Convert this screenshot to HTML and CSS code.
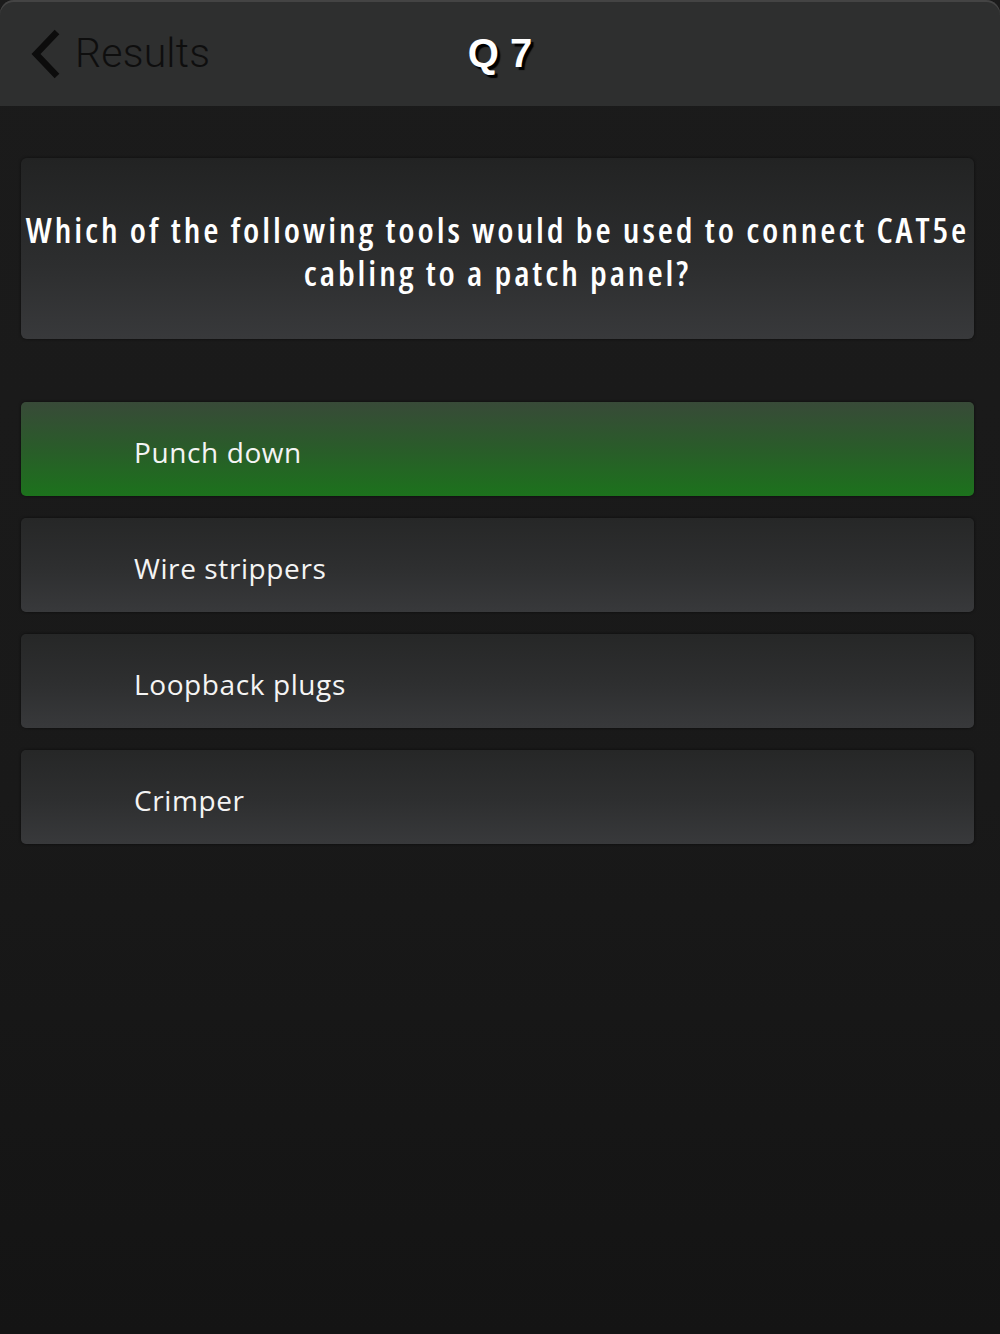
FILE: index.html
```html
<!DOCTYPE html>
<html>
<head>
<meta charset="utf-8">
<link rel="stylesheet" href="styles.css">
</head>
<body>
<div class="app">
  <header class="navbar">
    <div class="back">
      <svg class="chev" width="36" height="52" viewBox="0 0 36 52"><path d="M30 4 L9 26 L30 48" fill="none" stroke="#0c0c0c" stroke-width="6.5"/></svg>
      <span class="back-label">Results</span>
    </div>
    <h1 class="title">Q 7</h1>
  </header>
  <main class="content">
    <section class="question">
      <p>Which of the following tools would be used to connect CAT5e<br>cabling to a patch panel?</p>
    </section>
    <ul class="answers">
      <li class="answer correct">Punch down</li>
      <li class="answer">Wire strippers</li>
      <li class="answer">Loopback plugs</li>
      <li class="answer">Crimper</li>
    </ul>
  </main>
</div>
</body>
</html>
```
FILE: styles.css
```css
html, body { margin: 0; padding: 0; }
body {
  width: 1000px;
  height: 1334px;
  background: #161616;
  overflow: hidden;
}
.app {
  width: 1000px;
  height: 1334px;
  display: flex;
  flex-direction: column;
  background: linear-gradient(#1b1b1b, #191919 60%, #141414);
}
.navbar {
  height: 106px;
  flex: none;
  position: relative;
  background: #2e2f2f;
  border-radius: 14px 14px 0 0;
  box-shadow: inset 0 2px 0 #444;
  display: flex;
  align-items: center;
}
.back {
  display: flex;
  align-items: center;
  padding-left: 27px;
  gap: 12px;
}
.chev { display: block; margin-top: 2px; }
.back-label {
  font-family: "Roboto", "Liberation Sans", sans-serif;
  font-weight: 300;
  font-size: 41px;
  color: #0e0e0e;
  letter-spacing: 0.2px;
}
.title {
  position: absolute;
  left: 0; right: 0; top: 0;
  margin: 0;
  line-height: 106px;
  text-align: center;
  font-family: "Liberation Sans", Arial, sans-serif;
  font-weight: bold;
  font-size: 40px;
  color: #ffffff;
  text-shadow: 3px 3px 1px #000;
}
.content {
  padding: 52px 26px 0 21px;
  display: flex;
  flex-direction: column;
}
.question {
  height: 181px;
  border-radius: 6px;
  background: linear-gradient(#222323, #2d2e2f 60%, #38393b);
  box-shadow: 0 0 3px rgba(0,0,0,0.6);
  display: flex;
  align-items: center;
  justify-content: center;
}
.question p {
  margin: 0;
  text-align: center;
  white-space: nowrap;
  font-family: "Open Sans", sans-serif;
  font-stretch: 75%;
  font-weight: 600;
  font-size: 35px;
  line-height: 43px;
  color: #ffffff;
  letter-spacing: 2.9px;
  padding-top: 4px;
}
.answers {
  list-style: none;
  margin: 63px 0 0 0;
  padding: 0;
  display: flex;
  flex-direction: column;
  gap: 22px;
}
.answer {
  height: 94px;
  box-sizing: border-box;
  border-radius: 5px;
  padding-left: 113px;
  padding-top: 6px;
  display: flex;
  align-items: center;
  font-family: "Open Sans", "DejaVu Sans", sans-serif;
  font-size: 28px;
  letter-spacing: 0.6px;
  color: #f4f4f4;
  background: linear-gradient(#262727, #2e2f30 55%, #38393b);
  box-shadow: 0 0 3px rgba(0,0,0,0.6);
}
.answer.correct {
  background: linear-gradient(#384a38, #2b5a2b 45%, #1c721c);
}
```
